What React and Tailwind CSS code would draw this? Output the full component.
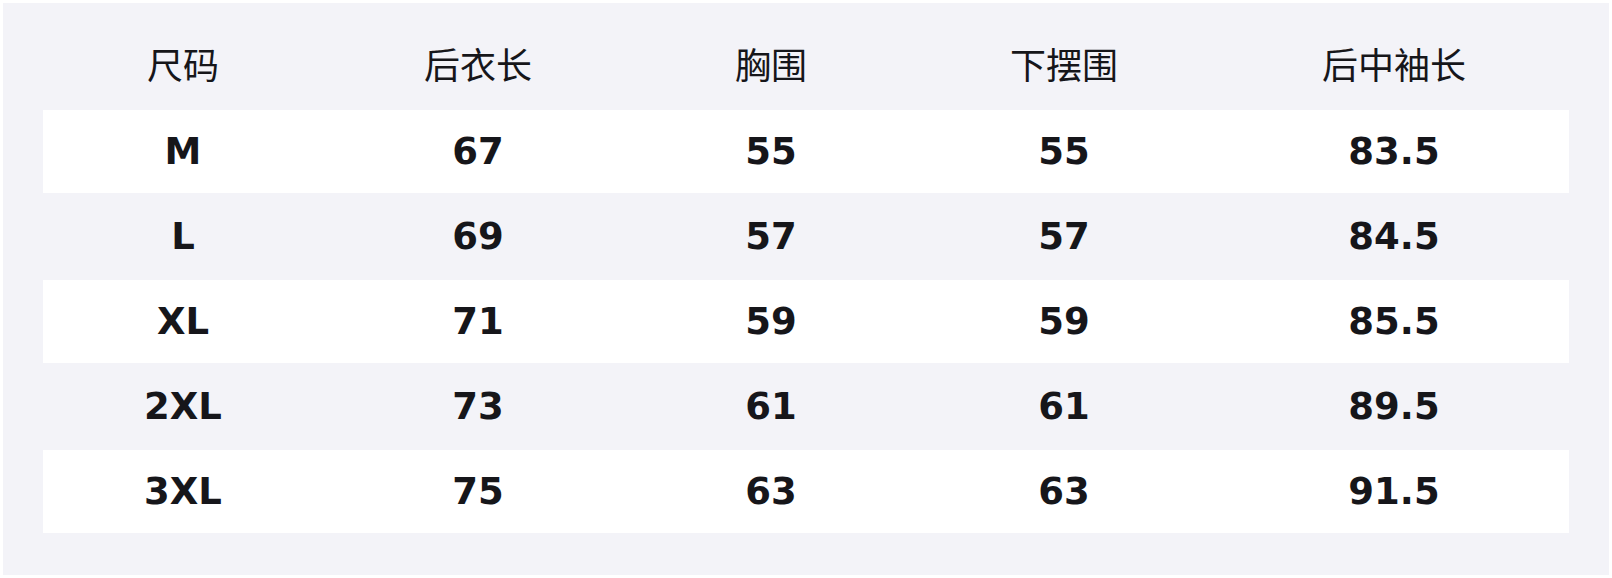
import React from "react";

const headers = ["尺码", "后衣长", "胸围", "下摆围", "后中袖长"];
const rows = [
  ["M", "67", "55", "55", "83.5"],
  ["L", "69", "57", "57", "84.5"],
  ["XL", "71", "59", "59", "85.5"],
  ["2XL", "73", "61", "61", "89.5"],
  ["3XL", "75", "63", "63", "91.5"],
];

export default function App() {
  return (
    <div className="w-[1612px] h-[578px] bg-white p-[3px]">
      <div className="w-full h-full bg-[#f3f3f8] px-[40px] pb-[42px]">
        <div className="grid grid-cols-[280px_310px_276px_310px_350px]">
          {headers.map((h) => (
            <div
              key={h}
              className="h-[107px] flex items-center justify-center pt-[12px] text-[36px] text-[#16161a]"
              style={{ fontFamily: '"Noto Sans CJK SC", "Noto Sans", sans-serif' }}
            >
              {h}
            </div>
          ))}
        </div>
        {rows.map((r, i) => (
          <div
            key={r[0]}
            className={
              "grid grid-cols-[280px_310px_276px_310px_350px] " +
              (i % 2 === 0 ? "bg-white h-[83px]" : "bg-[#f3f3f8] h-[87px]")
            }
          >
            {r.map((c, j) => (
              <div
                key={j}
                className="flex items-center justify-center font-bold text-[37px] text-[#16161a]"
                style={{ fontFamily: '"DejaVu Sans", sans-serif' }}
              >
                {c}
              </div>
            ))}
          </div>
        ))}
      </div>
    </div>
  );
}
